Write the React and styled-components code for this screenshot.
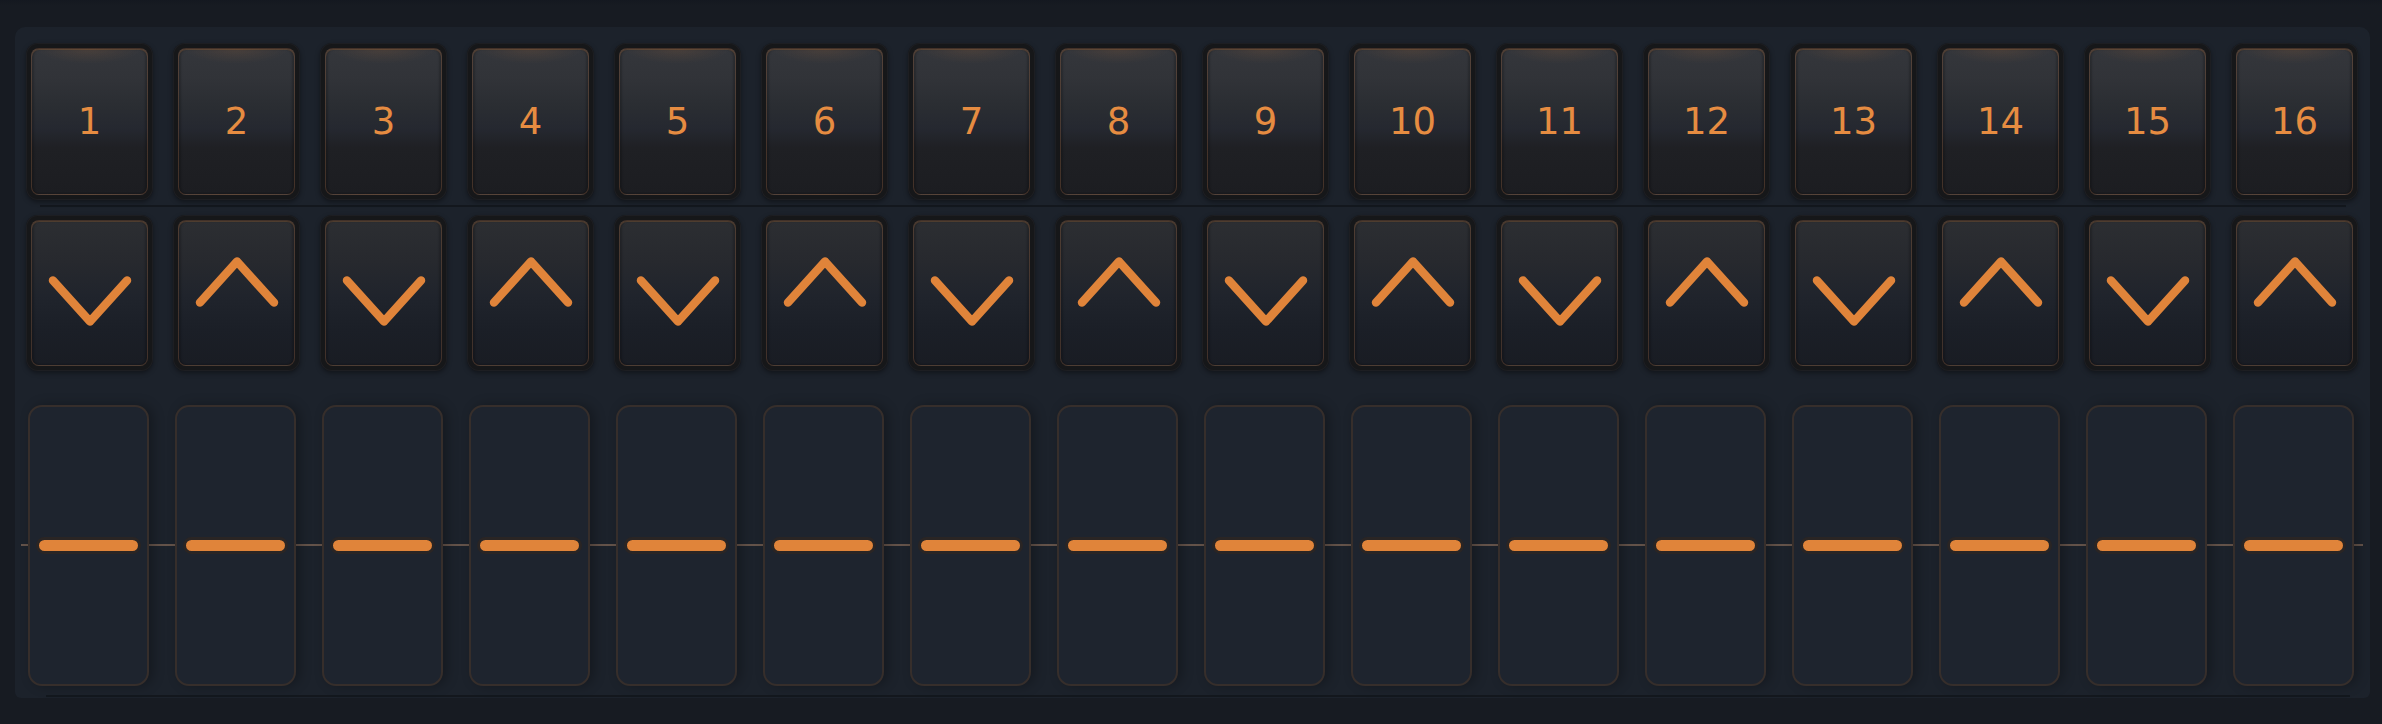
import React from "react";
import styled, { createGlobalStyle } from "styled-components";

const STEPS = Array.from({ length: 16 }, (_, i) => i + 1);

const GlobalStyle = createGlobalStyle`
  html, body {
    margin: 0;
    padding: 0;
    background: #171b22;
  }
  * {
    box-sizing: border-box;
  }
`;

const Page = styled.div`
  display: flex;
  flex-direction: column;
  height: 724px;
  padding: 27px 12px 0 15px;
  background: linear-gradient(180deg, #141820 0px, #171b22 6px, #171b22 100%);
`;

const Panel = styled.div`
  display: flex;
  flex-direction: column;
  height: 671px;
  padding: 16px 12px 0 11px;
  border-radius: 10px 10px 6px 6px;
  background: #1c222b;
`;

const StepRow = styled.div`
  display: grid;
  grid-template-columns: repeat(16, 1fr);
  column-gap: 20px;
  height: ${(p) => p.$height}px;
`;

const Divider = styled.div`
  height: 2px;
  margin: ${(p) => p.$margin};
  background: rgba(8, 10, 14, 0.45);
`;

const KeyFrame = styled.div`
  padding: 5px;
  border-radius: 12px;
  background: #161719;
  box-shadow: 0 2px 5px rgba(0, 0, 0, 0.4), inset 0 0 0 1px #1d1e22;
`;

const KeyFace = styled.div`
  display: flex;
  align-items: center;
  justify-content: center;
  height: 100%;
  border-radius: 8px;
  border: 1px solid rgba(140, 90, 55, 0.35);
  box-shadow: inset 0 1px 0 rgba(224, 138, 60, 0.22), inset 2px 0 2px rgba(0, 0, 0, 0.2),
    inset -2px 0 2px rgba(0, 0, 0, 0.2);
  background: ${(p) =>
    p.$variant === "number"
      ? `radial-gradient(ellipse 45% 10% at 50% 0%, rgba(224, 132, 58, 0.12), transparent),
         linear-gradient(180deg, #34363b 0%, #313338 20%, #2a2d32 40%, #252830 55%, #1f2024 68%, #1c1d21 100%)`
      : `linear-gradient(180deg, #2c2e32 0%, #27292e 28%, #20242c 52%, #1b1f27 75%, #191c23 100%)`};
  color: #e68c41;
  font-family: "DejaVu Sans", Verdana, sans-serif;
  font-size: 37px;
  line-height: 1;
`;

const Chevron = styled.svg`
  transform: translateY(${(p) => (p.$up ? -11 : 8)}px);
`;

const FaderRow = styled.div`
  display: grid;
  grid-template-columns: repeat(16, 1fr);
  column-gap: 20px;
  height: 281px;
  margin: 34px -5px 0;
  padding: 0 5px;
  background: linear-gradient(
    180deg,
    transparent calc(50% - 1px),
    #64534a calc(50% - 1px),
    #64534a calc(50% + 1px),
    transparent calc(50% + 1px)
  );
`;

const Track = styled.div`
  display: flex;
  align-items: center;
  justify-content: center;
  margin: 0 4px 0 2px;
  border: 2px solid #362e2b;
  border-radius: 14px;
  background: #1e242e;
  box-shadow: 4px 0 12px rgba(0, 0, 0, 0.28);
`;

const Handle = styled.div`
  width: 105px;
  height: 17px;
  border-radius: 9px;
  border: 3px solid #2a2524;
  background: #e0843a;
`;

const ArrowIcon = ({ up }) => (
  <Chevron $up={up} width="84" height="52" viewBox="0 0 84 52" fill="none">
    <path
      d={up ? "M5 46.5 L42 5.5 L79 46.5" : "M5 5.5 L42 46.5 L79 5.5"}
      stroke="#e0843a"
      strokeWidth="8.5"
      strokeLinecap="round"
      strokeLinejoin="round"
    />
  </Chevron>
);

export default function App() {
  return (
    <>
      <GlobalStyle />
      <Page>
        <Panel>
          <StepRow $height={157}>
            {STEPS.map((n) => (
              <KeyFrame key={n}>
                <KeyFace $variant="number">{n}</KeyFace>
              </KeyFrame>
            ))}
          </StepRow>
          <Divider $margin="5px 12px 8px 14px" />
          <StepRow $height={156}>
            {STEPS.map((n) => (
              <KeyFrame key={n}>
                <KeyFace $variant="arrow">
                  <ArrowIcon up={n % 2 === 0} />
                </KeyFace>
              </KeyFrame>
            ))}
          </StepRow>
          <FaderRow>
            {STEPS.map((n) => (
              <Track key={n}>
                <Handle />
              </Track>
            ))}
          </FaderRow>
          <Divider $margin="9px 8px 0 20px" />
        </Panel>
      </Page>
    </>
  );
}
